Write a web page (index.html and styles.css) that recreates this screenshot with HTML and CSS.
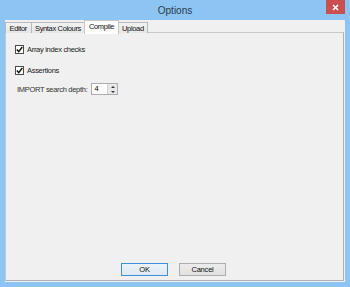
FILE: index.html
```html
<!DOCTYPE html>
<html lang="en">
<head>
    <meta charset="UTF-8">
    <title>Options</title>
    <link rel="stylesheet" href="styles.css">
</head>
<body>

    <div class="window">
        <div class="titlebar">
            <span class="title">Options</span>
            <div class="close">
                <svg width="7" height="7" viewBox="0 0 7 7">
                    <path d="M1 1 L6 6 M6 1 L1 6" stroke="#fff" stroke-width="1.6"/>
                </svg>
            </div>
        </div>

        <div class="client">
            <div class="tabs">
                <div class="tab">Editor</div>
                <div class="tab">Syntax Colours</div>
                <div class="tab active">Compile</div>
                <div class="tab">Upload</div>
            </div>

            <div class="panel">
                <label class="check-row">
                    <span class="checkbox">
                        <svg width="7" height="7" viewBox="0 0 7 7">
                            <path d="M0.8 3.6 L2.7 5.6 L6.3 1" fill="none" stroke="#111" stroke-width="1.4"/>
                        </svg>
                    </span>
                    Array index checks
                </label>

                <label class="check-row">
                    <span class="checkbox">
                        <svg width="7" height="7" viewBox="0 0 7 7">
                            <path d="M0.8 3.6 L2.7 5.6 L6.3 1" fill="none" stroke="#111" stroke-width="1.4"/>
                        </svg>
                    </span>
                    Assertions
                </label>

                <div class="spin-row">
                    <span>IMPORT search depth:</span>
                    <div class="spinbox">
                        <span class="spin-value">4</span>
                        <div class="spin-buttons">
                            <span class="arrow up"></span>
                            <span class="arrow down"></span>
                        </div>
                    </div>
                </div>

                <div class="footer">
                    <button class="btn default">OK</button>
                    <button class="btn">Cancel</button>
                </div>
            </div>
        </div>
    </div>

</body>
</html>
```

FILE: styles.css
```css
body {
    margin: 0;
    padding: 0;
    font-family: 'Liberation Sans', Arial, sans-serif;
    font-size: 7.5px;
    letter-spacing: -0.3px;
    color: #1a1a1a;
}

.window {
    width: 350px;
    height: 287px;
    background-color: #8cc4f4;
    display: flex;
    flex-direction: column;
    box-sizing: border-box;
}

.titlebar {
    height: 20px;
    position: relative;
    display: flex;
    justify-content: center;
    align-items: center;
}

.title {
    font-size: 10px;
    letter-spacing: 0;
    color: #2b3a48;
    margin-top: 1px;
}

.close {
    position: absolute;
    top: 0;
    right: 5px;
    width: 19px;
    height: 14px;
    background-color: #c9504f;
    display: flex;
    justify-content: center;
    align-items: center;
}

.client {
    flex: 1;
    margin: 0 5px 5px 5px;
    background-color: #f0f0f0;
    display: flex;
    flex-direction: column;
}

.tabs {
    display: flex;
    height: 13px;
    align-items: flex-end;
    position: relative;
    z-index: 1;
}

.tab {
    height: 11px;
    line-height: 11px;
    padding: 0 3.5px;
    border: 1px solid #b8b8b8;
    border-bottom: none;
    background: linear-gradient(#f2f2f2, #e6e6e6);
    margin-right: -1px;
    box-sizing: border-box;
    color: #111;
    letter-spacing: -0.35px;
}

.tab.active {
    height: 14px;
    line-height: 12px;
    background: #ffffff;
    border-color: #c8c8c8;
    margin-bottom: -1px;
    position: relative;
}

.panel {
    flex: 1;
    margin: -1px 1px 1px 0;
    border: 1px solid #c8c8c8;
    border-right-color: #b0b0b0;
    border-bottom-color: #b0b0b0;
    display: flex;
    flex-direction: column;
    padding: 12px 9px 4px 9px;
}

.check-row {
    display: flex;
    align-items: center;
    gap: 3px;
    height: 9px;
    margin-bottom: 12px;
}

.checkbox {
    width: 9px;
    height: 9px;
    border: 1px solid #4a4a4a;
    background: #fff;
    box-sizing: border-box;
    display: flex;
    justify-content: center;
    align-items: center;
}

.spin-row {
    display: flex;
    align-items: center;
    gap: 4px;
    margin-top: -4px;
    padding-left: 2px;
    color: #333;
}

.spinbox {
    width: 27px;
    height: 12px;
    border: 1px solid #abadb3;
    background: #fff;
    box-sizing: border-box;
    display: flex;
    justify-content: space-between;
}

.spin-value {
    padding-left: 2px;
    line-height: 10px;
    color: #000;
}

.spin-buttons {
    width: 9px;
    display: flex;
    flex-direction: column;
    background: #e8e8e8;
    border-left: 1px solid #d0d0d0;
}

.arrow {
    flex: 1;
    display: flex;
    justify-content: center;
    align-items: center;
}

.arrow::after {
    content: '';
    border-left: 2px solid transparent;
    border-right: 2px solid transparent;
}

.arrow.up::after {
    border-bottom: 2px solid #333;
}

.arrow.down::after {
    border-top: 2px solid #333;
}

.footer {
    margin-top: auto;
    display: flex;
    justify-content: center;
    gap: 11px;
    padding-right: 2px;
}

.btn {
    width: 47px;
    height: 13px;
    padding: 0;
    font-family: inherit;
    font-size: 7.5px;
    letter-spacing: -0.2px;
    color: #111;
    background: linear-gradient(#ececec, #e1e1e1);
    border: 1px solid #adadad;
    box-sizing: border-box;
}

.btn.default {
    border-color: #3d8ee0;
    background: linear-gradient(#eaf3fb, #e1e8ef);
}
```
